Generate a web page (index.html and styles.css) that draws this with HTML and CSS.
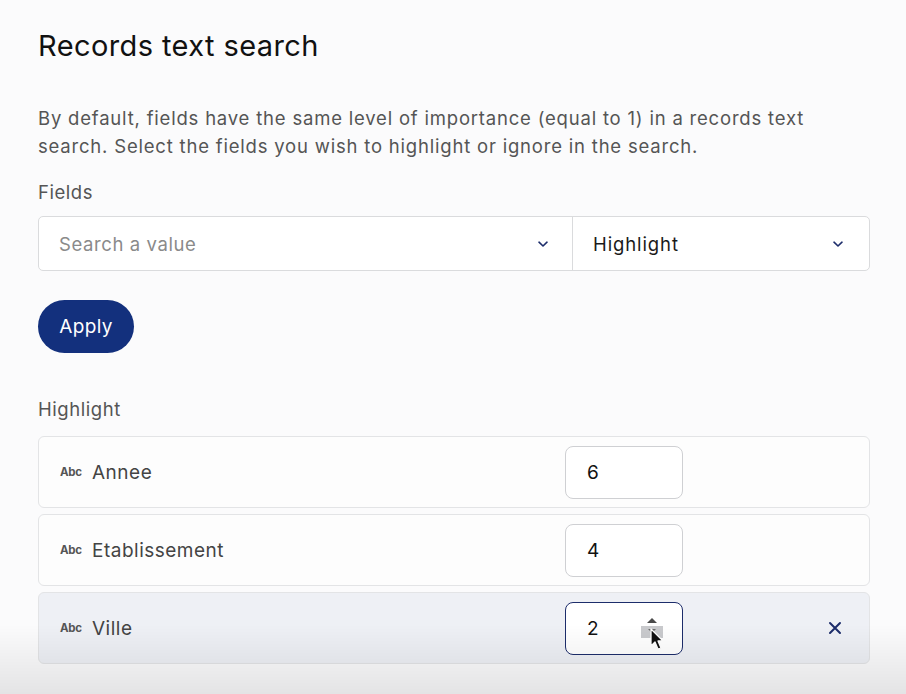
FILE: index.html
```html
<!DOCTYPE html>
<html>
<head>
<meta charset="utf-8">
<link rel="stylesheet" href="styles.css">
</head>
<body>
<main class="panel">
  <h1 class="title">Records text search</h1>
  <p class="desc">By default, fields have the same level of importance (equal to 1) in a records text search. Select the fields you wish to highlight or ignore in the search.</p>
  <div class="label">Fields</div>
  <div class="selectrow">
    <div class="sel sel-main">
      <span class="placeholder">Search a value</span>
      <svg class="chev" width="14" height="14" viewBox="0 0 14 14"><path d="M3 5.2 L7 9 L11 5.2" fill="none" stroke="#1d2d6b" stroke-width="1.6" stroke-linecap="round" stroke-linejoin="round"/></svg>
    </div>
    <div class="sel sel-mode">
      <span class="value">Highlight</span>
      <svg class="chev" width="14" height="14" viewBox="0 0 14 14"><path d="M3 5.2 L7 9 L11 5.2" fill="none" stroke="#1d2d6b" stroke-width="1.6" stroke-linecap="round" stroke-linejoin="round"/></svg>
    </div>
  </div>
  <button class="apply">Apply</button>
  <div class="label label-hl">Highlight</div>
  <div class="rows">
    <div class="row">
      <div class="field"><span class="abc">Abc</span><span class="name">Annee</span></div>
      <div class="num">6</div>
    </div>
    <div class="row">
      <div class="field"><span class="abc">Abc</span><span class="name">Etablissement</span></div>
      <div class="num">4</div>
    </div>
    <div class="row row-active">
      <div class="field"><span class="abc">Abc</span><span class="name">Ville</span></div>
      <div class="num num-focus">2
        <span class="spin">
          <svg width="22" height="26" viewBox="0 0 22 26"><rect x="0" y="12" width="22" height="12" fill="#c9cacd"/><path d="M6 9 L11 4 L16 9 Z" fill="#4a4a4a"/><path d="M7 15 L11 19 L15 15 Z" fill="#6a6a6a"/></svg>
        </span>
        <svg class="cursor" width="16" height="24" viewBox="0 0 16 24"><path d="M1 1 L1 18 L5 14 L8 21 L11 20 L8 13 L13 13 Z" fill="#111" stroke="#fff" stroke-width="1.3" stroke-linejoin="round"/></svg>
      </div>
      <svg class="close" width="14" height="14" viewBox="0 0 14 14"><path d="M2 2 L12 12 M12 2 L2 12" stroke="#1d2d6b" stroke-width="2" stroke-linecap="round"/></svg>
    </div>
  </div>
</main>
<div class="shade"></div>
</body>
</html>
```
FILE: styles.css
```css
html, body {
  margin: 0;
  padding: 0;
  background: #fbfbfc;
}
body {
  font-family: Inter, "Liberation Sans", Arial, sans-serif;
  color: #1a1a1a;
  width: 906px;
  height: 694px;
  overflow: hidden;
}
.panel {
  padding: 27px 36px 0 38px;
  width: 832px;
}
.title {
  margin: 0;
  font-size: 29px;
  font-weight: 400;
  line-height: 38px;
  color: #111;
  letter-spacing: 0.4px;
}
.desc {
  margin: 39px 0 0 0;
  font-size: 18.5px;
  line-height: 28px;
  color: #555;
  width: 800px;
  letter-spacing: 0.8px;
}
.label {
  margin-top: 18px;
  font-size: 18.5px;
  line-height: 28px;
  color: #555;
  letter-spacing: 0.55px;
}
.selectrow {
  margin-top: 10px;
  display: flex;
  height: 55px;
  border: 1px solid #dadbdd;
  border-radius: 5px;
  background: #fff;
  box-sizing: border-box;
}
.sel {
  display: flex;
  align-items: center;
  justify-content: space-between;
  font-size: 18.5px;
  letter-spacing: 0.6px;
}
.sel-main {
  width: 534px;
  padding: 0 22px 0 20px;
  border-right: 1px solid #dadbdd;
  box-sizing: border-box;
}
.sel-mode {
  flex: 1;
  padding: 0 24px 0 20px;
}
.placeholder { color: #8a8a8a; }
.value { color: #1a1a1a; letter-spacing: 0.9px; }
.apply {
  margin-top: 29px;
  display: block;
  width: 96px;
  height: 53px;
  border: none;
  border-radius: 27px;
  background: #13307d;
  color: #fff;
  font-family: inherit;
  font-size: 19px;
  letter-spacing: 0.4px;
  padding: 0;
}
.label-hl {
  margin-top: 42px;
}
.rows {
  margin-top: 13px;
  display: flex;
  flex-direction: column;
  gap: 6px;
}
.row {
  height: 72px;
  box-sizing: border-box;
  border: 1px solid #e3e4e6;
  border-radius: 6px;
  background: #fdfdfd;
  display: grid;
  grid-template-columns: 505px 118px 1fr;
  align-items: center;
  padding-left: 21px;
  padding-right: 27px;
}
.row-active {
  background: #eef0f5;
}
.field {
  display: flex;
  align-items: center;
}
.abc {
  font-size: 11.5px;
  font-weight: 700;
  color: #555;
  width: 32px;
  letter-spacing: -0.3px;
}
.name {
  font-size: 19px;
  color: #444;
  letter-spacing: 0.5px;
}
.num {
  position: relative;
  width: 118px;
  height: 53px;
  box-sizing: border-box;
  border: 1px solid #cfd0d3;
  border-radius: 8px;
  background: #fff;
  display: flex;
  align-items: center;
  padding-left: 21px;
  font-size: 19px;
  color: #111;
}
.num-focus {
  border: 1.5px solid #1d2d6b;
}
.spin {
  position: absolute;
  left: 75px;
  top: 11px;
  line-height: 0;
}
.cursor {
  position: absolute;
  left: 84px;
  top: 25px;
}
.close {
  display: block;
  justify-self: end;
}
.shade {
  position: fixed;
  left: 0;
  right: 0;
  bottom: 0;
  height: 70px;
  background: linear-gradient(to bottom, rgba(0,0,0,0), rgba(0,0,0,0.09));
  pointer-events: none;
}
```
